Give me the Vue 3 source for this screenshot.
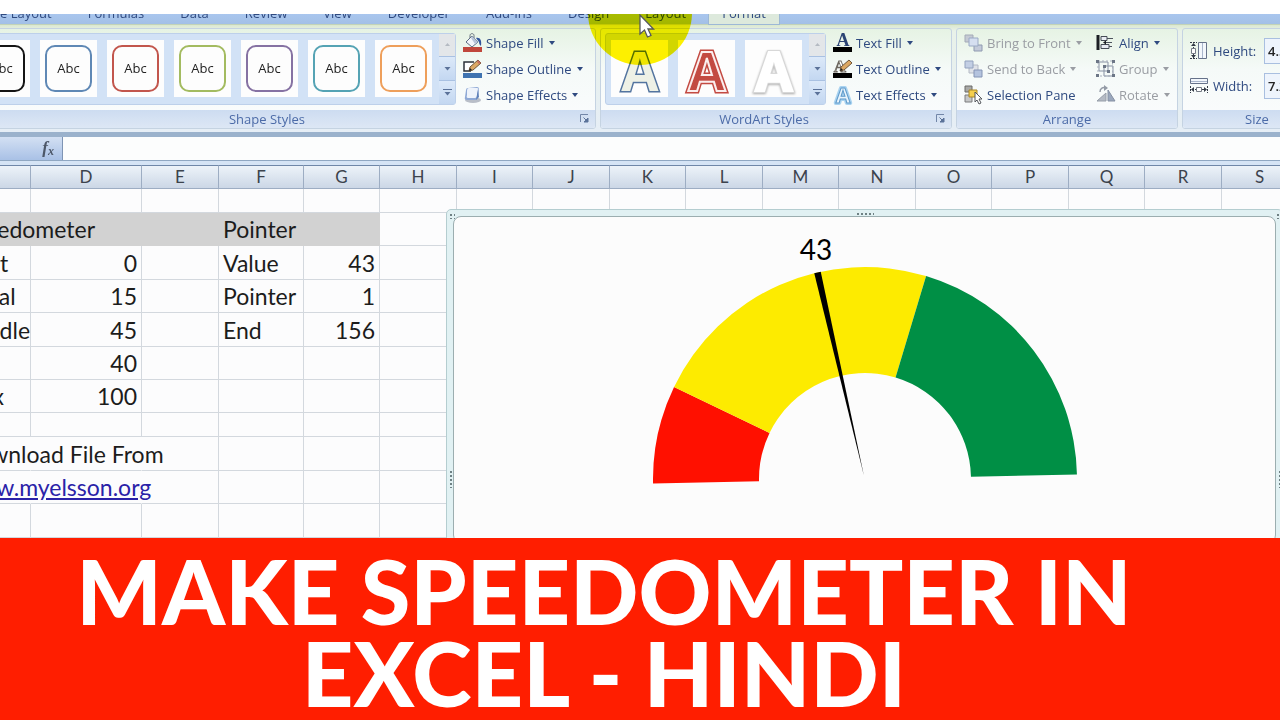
<template>
  <div class="page">
    <header class="excel">
      <!-- Tab strip -->
      <nav class="tabs" aria-label="Ribbon tabs">
        <button
          v-for="tab in tabs"
          :key="tab.id"
          type="button"
          class="tabs__item"
          :class="{ 'tabs__item--active': tab.id === activeTab }"
          @click="activeTab = tab.id"
        >{{ tab.label }}</button>
      </nav>

      <!-- Ribbon -->
      <div class="ribbon">
        <section class="group group--shapes">
          <div class="group__body">
            <div class="gallery">
              <button
                v-for="color in shapeColors"
                :key="color"
                type="button"
                class="gallery__tile"
              >
                <span class="gallery__shape" :style="{ borderColor: color }">Abc</span>
              </button>
              <div class="gallery__scroll">
                <button v-for="s in scrollers" :key="s.label" type="button" :aria-label="s.label">
                  <svg width="9" height="9" viewBox="0 0 9 9" v-html="s.svg"></svg>
                </button>
              </div>
            </div>
            <div class="commands">
              <button v-for="c in shapeCommands" :key="c.label" type="button" class="command">
                <svg width="20" height="20" viewBox="0 0 20 20" v-html="icons[c.icon]"></svg>
                <span>{{ c.label }}</span>
                <i class="caret"></i>
              </button>
            </div>
          </div>
          <footer class="group__label">Shape Styles
            <button type="button" class="launcher" aria-label="Format shape">
              <svg width="9" height="9" viewBox="0 0 9 9" v-html="launcher"></svg>
            </button>
          </footer>
        </section>

        <section class="group group--wordart">
          <div class="group__body">
            <div class="gallery">
              <button
                v-for="style in wordArt"
                :key="style"
                type="button"
                class="gallery__tile"
              >
                <svg class="wordart" :class="`wordart--${style}`" width="57" height="57" viewBox="0 0 57 57">
                  <text class="wordart__outer" x="29" y="51" text-anchor="middle">A</text>
                  <text class="wordart__inner" x="29" y="51" text-anchor="middle" aria-hidden="true">A</text>
                </svg>
              </button>
              <div class="gallery__scroll">
                <button v-for="s in scrollers" :key="s.label" type="button" :aria-label="s.label">
                  <svg width="9" height="9" viewBox="0 0 9 9" v-html="s.svg"></svg>
                </button>
              </div>
            </div>
            <div class="commands">
              <button v-for="c in textCommands" :key="c.label" type="button" class="command">
                <svg width="20" height="20" viewBox="0 0 20 20" v-html="icons[c.icon]"></svg>
                <span>{{ c.label }}</span>
                <i class="caret"></i>
              </button>
            </div>
          </div>
          <footer class="group__label">WordArt Styles
            <button type="button" class="launcher" aria-label="Format text effects">
              <svg width="9" height="9" viewBox="0 0 9 9" v-html="launcher"></svg>
            </button>
          </footer>
        </section>

        <section class="group group--arrange">
          <div class="group__body">
            <div v-for="(column, i) in arrangeCommands" :key="i" class="commands">
              <button
                v-for="c in column"
                :key="c.label"
                type="button"
                class="command"
                :disabled="c.disabled"
              >
                <svg width="20" height="20" viewBox="0 0 20 20" v-html="icons[c.icon]"></svg>
                <span>{{ c.label }}</span>
                <i v-if="!c.plain" class="caret"></i>
              </button>
            </div>
          </div>
          <footer class="group__label">Arrange</footer>
        </section>

        <section class="group group--size">
          <div class="group__body group__body--size">
            <div v-for="f in sizeFields" :key="f.id" class="field">
              <svg width="20" height="20" viewBox="0 0 20 20" v-html="icons[f.id]"></svg>
              <label :for="f.id">{{ f.label }}</label>
              <input :id="f.id" v-model="f.value" type="text">
            </div>
          </div>
          <footer class="group__label">Size</footer>
        </section>
      </div>

      <!-- Pointer highlight -->
      <div class="highlight"></div>
      <svg class="cursor" width="18" height="25" viewBox="0 0 18 25">
        <path d="M2 1v19l4.500-4 3 7 3.500-1.500-3-6.500h5.500z" fill="#fff" stroke="#55585c" stroke-width="1.300" />
      </svg>
    </header>

    <!-- Formula bar -->
    <div class="formula">
      <label class="formula__fx" for="formula">f<sub>x</sub></label>
      <input id="formula" v-model="formula" class="formula__input" type="text">
    </div>

    <main class="sheet">
      <table class="grid">
        <colgroup>
          <col v-for="name in columns" :key="name" :class="`col-${name.toLowerCase()}`">
        </colgroup>
        <thead>
          <tr>
            <th v-for="name in columns" :key="name" scope="col">{{ name === 'C' ? '' : name }}</th>
          </tr>
        </thead>
        <tbody>
          <tr v-for="(row, r) in rows" :key="r" :class="`row-${row.size}`">
            <td
              v-for="name in columns"
              :key="name"
              :class="{
                filled: row.filled && 'CDEFG'.includes(name),
                number: typeof row[name] === 'number',
                spill: row.spill && 'CD'.includes(name)
              }"
            >
              <a v-if="row.link && name === 'C'" href="#">{{ row[name] }}</a>
              <template v-else>{{ row[name] }}</template>
            </td>
          </tr>
        </tbody>
      </table>

      <!-- Chart object floating over the cells -->
      <div class="chart">
        <i class="grip grip--corner"></i>
        <i class="grip grip--top"></i>
        <i class="grip grip--corner grip--right"></i>
        <i class="grip grip--left"></i>
        <i class="grip grip--left grip--end"></i>
        <div class="chart__area">
          <svg width="430" height="270" viewBox="0 0 430 270" role="img" aria-label="Speedometer chart">
            <path v-for="s in segments" :key="s.color" :d="s.d" :fill="s.color" />
            <path :d="needle" fill="#000" />
            <text class="chart__value" x="166" y="32" text-anchor="middle">{{ value }}</text>
          </svg>
        </div>
      </div>
    </main>

    <h1 class="banner">MAKE SPEEDOMETER IN<br>EXCEL - HINDI</h1>
  </div>
</template>

<script setup>
import { computed, ref } from 'vue'

const tabs = [
  { id: 'page', label: 'Page Layout' },
  { id: 'formulas', label: 'Formulas' },
  { id: 'data', label: 'Data' },
  { id: 'review', label: 'Review' },
  { id: 'view', label: 'View' },
  { id: 'developer', label: 'Developer' },
  { id: 'addins', label: 'Add-Ins' },
  { id: 'design', label: 'Design' },
  { id: 'layout', label: 'Layout' },
  { id: 'format', label: 'Format' }
]
const activeTab = ref('format')
const formula = ref('')

const shapeColors = ['#141414', '#5f88b5', '#c2564d', '#a3bb60', '#8672a3', '#55a3b4', '#ee9f5b']
const wordArt = ['cream', 'red', 'white']

const scrollers = [
  { label: 'Previous row', svg: '<path d="M2 6l2.500-3 2.500 3z" fill="#b4bac2"/>' },
  { label: 'Next row', svg: '<path d="M1.500 3h6l-3 3.500z" fill="#5b7299"/>' },
  { label: 'More', svg: '<path d="M0 1.500h9" stroke="#5b7299"/><path d="M1.500 4h6l-3 3.500z" fill="#5b7299"/>' }
]
const launcher = '<path d="M.5 8V.5H8" fill="none" stroke="#7286a8"/><path d="M3.500 3.500l3 3M8 4v4H4z" fill="#5b7299" stroke="#5b7299"/>'

const shapeCommands = [
  { label: 'Shape Fill', icon: 'bucket' },
  { label: 'Shape Outline', icon: 'pencil' },
  { label: 'Shape Effects', icon: 'cube' }
]
const textCommands = [
  { label: 'Text Fill', icon: 'textFill' },
  { label: 'Text Outline', icon: 'textOutline' },
  { label: 'Text Effects', icon: 'textEffects' }
]
const arrangeCommands = [
  [
    { label: 'Bring to Front', icon: 'front', disabled: true },
    { label: 'Send to Back', icon: 'back', disabled: true },
    { label: 'Selection Pane', icon: 'pane', plain: true }
  ],
  [
    { label: 'Align', icon: 'align' },
    { label: 'Group', icon: 'group', disabled: true },
    { label: 'Rotate', icon: 'rotate', disabled: true }
  ]
]
const sizeFields = ref([
  { id: 'height', label: 'Height:', value: '4.52"' },
  { id: 'width', label: 'Width:', value: '7.21"' }
])

const icons = {
  bucket: '<path d="M7 5V2.500c0-2.500 4-2.500 4 0V7" fill="none" stroke="#66707d"/><path d="M3 9l6-6 6 6-6 5z" fill="#f2f5fa" stroke="#5d6d85"/><path d="M9 3l6 6-3 2-4-6z" fill="#b7c4d8"/><path d="M13 5c4-1 6 2 5 8-1-1-2-2-2-4z" fill="#31549b"/><path d="M0 14h19v5H0z" fill="#c0473c"/>',
  pencil: '<path d="M11 3H1v9h7" fill="#fff" stroke="#2b3038" stroke-width="1.500"/><path d="M6 12l1-4 8-7 3 3-8 7z" fill="#dca863" stroke="#6f5639"/><path d="M6 12l1-3 2 2z" fill="#222"/><path d="M15 1l3 3-2 1-2-2z" fill="#c46c60"/><path d="M0 14h19v5H0z" fill="#3f73b0"/>',
  cube: '<ellipse cx="10" cy="15" rx="8" ry="3" fill="#b9bec8"/><path d="M5 3l9-1q2 0 2 2l-1 8q0 2-2 3H4q-3 0-2-3l1-7q0-2 2-2z" fill="#8fa9d6"/><path d="M6 3h8q2 0 1 3l-1 5q0 2-2 2H5q-2 0-1-3l0-4q0-3 2-3z" fill="#eef3fb"/><path d="M15 4l1 8-3 3z" fill="#5f80b9"/>',
  textFill: '<text x="10" y="13" text-anchor="middle" font-family="Liberation Serif, serif" font-weight="700" font-size="18" fill="#2b4374">A</text><path d="M0 14h19v5H0z" fill="#000"/>',
  textOutline: '<text x="7" y="13" text-anchor="middle" font-family="Liberation Serif, serif" font-weight="700" font-size="17" fill="#fff" stroke="#6c675f" stroke-width=".8">A</text><path d="M7 12l1-4 8-7 3 3-8 7z" fill="#dca863" stroke="#6f5639"/><path d="M7 12l1-3 2 2z" fill="#222"/><path d="M0 14h19v5H0z" fill="#000"/>',
  textEffects: '<text x="10" y="18" text-anchor="middle" font-family="Open Sans, sans-serif" font-weight="700" font-size="21" fill="#dceefb" stroke="#a9d3f0" stroke-width="4" stroke-linejoin="round">A</text><text x="10" y="18" text-anchor="middle" font-family="Open Sans, sans-serif" font-weight="700" font-size="21" fill="#e8f4fc" stroke="#5f9acb" stroke-width="1">A</text>',
  front: '<path d="M1 2h8v7H1z" fill="#c5cad3" stroke="#a4abb7"/><path d="M10 12h8v6h-8z" fill="#c3cad9" stroke="#8f9ab0"/><path d="M5 5h9v8H5z" fill="#d5dff0" stroke="#9aa9c4"/>',
  back: '<path d="M5 6h9v8H5z" fill="#dfe2e8" stroke="#b4bac5"/><path d="M1 2h8v7H1z" fill="#c3cfe4" stroke="#93a2be"/><path d="M10 11h8v7h-8z" fill="#b4c3de" stroke="#8494b5"/>',
  pane: '<path d="M1 1h7v6H1z" fill="#a9a9a7" stroke="#6b6b68"/><path d="M1 10h7v7H1z" fill="#c6c7c8" stroke="#7c7d7f"/><path d="M5 5h8v7H5z" fill="#f5cf4e" stroke="#a98728"/><path d="M11 7v10l2-2 2 4 2-1-2-4h3z" fill="#fff" stroke="#54575c"/>',
  align: '<path d="M2 2v15" stroke="#1c1f24" stroke-width="3"/><path d="M5 3.500h6v4H5zM5 11.500h8v4H5z" fill="#e9edf3" stroke="#454b55"/><path d="M11 5.500h6M8 9.500h8M13 13.500h3" stroke="#4d535d"/><path d="M7 9.500l3-2v4z" fill="#1c1f24"/>',
  group: '<path d="M3 3h9v9H3zM8 7h9v10H8z" fill="none" stroke="#8791a3"/><path d="M2 2h14.500v15H2z" fill="none" stroke="#a9b0bd" stroke-dasharray="2 2"/><path d="M0 1h3v3H0zM16 1h3v3h-3zM0 15h3v3H0zM16 15h3v3h-3zM7 6h3v3H7zM11 11h3v3h-3z" fill="#6c7686"/>',
  rotate: '<path d="M10 16H1l9-8z" fill="#b4bac4" stroke="#969ea9"/><path d="M12 5v11h7z" fill="#9ba8bd" stroke="#8590a3"/><path d="M4 7c0-4 3-5 6-4" fill="none" stroke="#949ba6" stroke-width="1.500"/><path d="M8 0l4 3-4 3z" fill="#949ba6"/>',
  height: '<path d="M9.500 1.500h8v16h-8z" fill="#f3f7fc" stroke="#66728a"/><path d="M13.500 2v15" stroke="#a9b6cc"/><path d="M1 1.500h7M1 17.500h7M4.500 3v4M4.500 13v4" stroke="#343b47" stroke-dasharray="2 1"/><path d="M2 5l2.500-3 2.500 3zM2 14l2.500 3 2.500-3z" fill="#343b47"/><path d="M2.500 7.500h4v5h-4z" fill="#fff" stroke="#747a85"/>',
  width: '<path d="M1.500 2.500h17v5h-17z" fill="#f3f7fc" stroke="#66728a"/><path d="M2 5.500h16" stroke="#a9b6cc"/><path d="M1.500 10v7M18.500 10v7M3 13.500h4M13 13.500h4" stroke="#343b47" stroke-dasharray="2 1"/><path d="M5 11l-3 2.500 3 2.500zM15 11l3 2.500-3 2.500z" fill="#343b47"/><path d="M7.500 11.500h5v4h-5z" fill="#fff" stroke="#747a85"/>'
}

// Sheet data
const columns = 'CDEFGHIJKLMNOPQRS'.split('')
const rows = [
  { size: 'short' },
  { size: 'low', filled: true, C: 'Speedometer', F: 'Pointer' },
  { size: 'tall', C: 'Start', D: 0, F: 'Value', G: 43 },
  { size: 'low', C: 'Initial', D: 15, F: 'Pointer', G: 1 },
  { size: 'tall', C: 'Middle', D: 45, F: 'End', G: 156 },
  { size: 'low', D: 40 },
  { size: 'low', C: 'Max', D: 100 },
  { size: 'short' },
  { size: 'tall', spill: true, C: 'Download File From' },
  { size: 'low', spill: true, link: true, C: 'www.myelsson.org' },
  { size: 'tall' }
]

// Gauge geometry
const value = ref(43)
const center = { x: 215, y: 251 }
const outer = 212
const inner = 106
const tilt = -1.25

const point = (angle, radius) => {
  const rad = (angle * Math.PI) / 180
  const x = center.x - radius * Math.cos(rad)
  const y = center.y - radius * Math.sin(rad)
  return `${x.toFixed(2)} ${y.toFixed(2)}`
}

const segments = computed(() => {
  let start = tilt
  return [
    { share: 15, color: '#ff1000' },
    { share: 45, color: '#fdeb00' },
    { share: 40, color: '#008f45' }
  ].map(({ share, color }) => {
    const end = start + share * 1.8
    const d = `M${point(start, outer)}A${outer} ${outer} 0 0 1 ${point(end, outer)}` +
      `L${point(end, inner)}A${inner} ${inner} 0 0 0 ${point(start, inner)}z`
    start = end
    return { color, d }
  })
})

const needle = computed(() => {
  const angle = value.value * 1.8 + tilt
  return `M214 248L${point(angle, outer)}L${point(angle + 1.8, outer)}z`
})
</script>

<style>
body {
  margin: 0;
  background: #fff;
}
</style>

<style scoped>
.page {
  display: flex;
  flex-direction: column;
  min-height: 100vh;
  padding-top: 14px;
  box-sizing: border-box;
  overflow: hidden;
  font-family: "Open Sans", "Noto Sans", sans-serif;
  font-size: 13px;
  color: #2f4a80;
}

button,
input {
  font: inherit;
  color: inherit;
}

button {
  padding: 0;
  border: 0;
  background: none;
}

svg {
  display: block;
  flex: none;
}

.excel {
  position: relative;
  overflow: hidden;
}

/* Tabs */
.tabs {
  display: flex;
  align-items: flex-end;
  height: 10px;
  padding-right: 24px;
  margin-left: -40px;
  background: linear-gradient(#a9c6ee, #a3c0e6);
}

.tabs__item {
  flex: none;
  height: 20px;
  padding: 0 18px 2px;
  line-height: 18px;
}

.tabs__item--active {
  margin: 0 5px;
  padding: 0 13px 2px;
  background: #dde9dc;
  box-shadow: 0 0 0 1px #9db8d6;
}

/* Ribbon */
.ribbon {
  display: flex;
  gap: 4px;
  margin-left: -62px;
  padding: 3px 0;
  border-top: 1px solid #c3d3b8;
  border-bottom: 5px solid #9bb2cc;
  background: linear-gradient(#dbe8cf, #e9f2e9 6px, #e6eef6);
}

.group {
  display: flex;
  flex: none;
  flex-direction: column;
  box-sizing: border-box;
  height: 101px;
  border: 1px solid #c5d3e2;
  border-radius: 3px;
  background: linear-gradient(#e6f3e4, #f5faf8 40px, #fbfcfe);
  overflow: hidden;
}

.group--shapes {
  width: 658px;
}

.group--wordart {
  width: 352px;
}

.group--arrange {
  width: 222px;
}

.group--size {
  width: 150px;
}

.group__body {
  display: flex;
  flex: 1;
  align-items: center;
  padding: 0 0 2px 4px;
}

.group--shapes .group__body {
  padding-left: 28px;
}

.group__label {
  position: relative;
  height: 18px;
  line-height: 18px;
  text-align: center;
  color: #4c6ba8;
  background: linear-gradient(#cddcf1, #dde7f5);
}

.group--wordart .group__label {
  padding-right: 24px;
}

.launcher {
  position: absolute;
  right: 6px;
  top: 4px;
}

.gallery {
  display: flex;
  align-items: center;
  gap: 10px;
  box-sizing: border-box;
  height: 72px;
  padding-left: 5px;
  border: 1px solid #bdd0ea;
  border-radius: 3px;
  background: #d2e2f6;
}

.gallery__tile {
  display: flex;
  align-items: center;
  justify-content: center;
  width: 57px;
  height: 57px;
  background: #fdfdfd;
}

.gallery__shape {
  box-sizing: border-box;
  width: 47px;
  height: 47px;
  border: 2px solid;
  border-radius: 10px;
  line-height: 43px;
  color: #222;
}

.gallery__scroll {
  display: flex;
  flex-direction: column;
  gap: 1px;
  width: 16px;
  height: 70px;
  margin-left: -3px;
  background: #a9c1e2;
}

.gallery__scroll button {
  display: flex;
  flex: 1;
  align-items: center;
  justify-content: center;
  background: linear-gradient(#dce9f9, #c3d7f1);
}

.gallery__scroll button:first-child {
  background: #e3e6e9;
}

.wordart {
  font-size: 54px;
  font-weight: 700;
}

.wordart--cream .wordart__outer {
  fill: #f0f2e4;
  stroke: #53749f;
  stroke-width: 3px;
}

.wordart--cream .wordart__inner {
  fill: #eef1e6;
}

.wordart--red .wordart__outer {
  fill: #fff;
  stroke: #c34a42;
  stroke-width: 5px;
}

.wordart--red .wordart__inner {
  fill: #c34a42;
  stroke: #fbeeee;
  stroke-width: 2px;
}

.wordart--white .wordart__outer {
  fill: #fff;
  stroke: #d8d8d8;
  stroke-width: 4px;
  filter: drop-shadow(0 1px 1px #aaa);
}

.wordart--white .wordart__inner {
  fill: #fff;
  stroke: #fff;
  stroke-width: 2px;
}

.commands {
  display: flex;
  flex-direction: column;
  align-items: flex-start;
  padding-left: 7px;
}

.group--arrange .commands {
  width: 128px;
  padding-left: 3px;
}

.group--arrange .commands + .commands {
  width: auto;
  padding-left: 4px;
}

.command {
  display: flex;
  align-items: center;
  gap: 3px;
  height: 26px;
  font-weight: 500;
  white-space: nowrap;
}

.command:disabled {
  color: #9a9da3;
}

.caret {
  margin-left: 2px;
  border: 3px solid transparent;
  border-top: 4px solid currentColor;
  border-bottom: 0;
}

.group__body--size {
  flex-direction: column;
  align-items: flex-start;
  justify-content: center;
  gap: 9px;
}

.field {
  display: flex;
  align-items: center;
  padding-left: 2px;
  font-weight: 500;
}

.field label {
  width: 51px;
  padding-left: 4px;
}

.field input {
  box-sizing: border-box;
  width: 60px;
  height: 26px;
  padding: 0 3px;
  border: 1px solid #a9bfe0;
  background: #eef4fc;
  font-weight: 600;
  color: #222;
}

.highlight {
  position: absolute;
  top: -53px;
  left: 588px;
  width: 104px;
  height: 104px;
  border-radius: 50%;
  background: #fff200;
  mix-blend-mode: multiply;
}

.cursor {
  position: absolute;
  top: 0;
  left: 638px;
}

/* Formula bar */
.formula {
  display: flex;
  height: 23px;
  border-bottom: 1px solid #8fa7c2;
  background: #fcfdfd;
}

.formula__fx {
  box-sizing: border-box;
  width: 63px;
  padding-right: 8px;
  border-right: 1px solid #7e94b4;
  background: linear-gradient(#d3e0f3, #a9c1e6);
  font-family: "Liberation Serif", serif;
  font-size: 17px;
  font-style: italic;
  font-weight: 700;
  line-height: 22px;
  text-align: right;
  color: #4c5768;
}

.formula__fx sub {
  font-size: 12px;
  line-height: 0;
  vertical-align: -2px;
}

.formula__input {
  flex: 1;
  min-width: 0;
  padding: 0 4px;
  border: 0;
  background: none;
}

/* Sheet */
.sheet {
  position: relative;
  flex: 1;
  overflow: hidden;
  padding-top: 4px;
  background: #d5e4f5;
  font-family: Lato, sans-serif;
}

.grid {
  width: 1342px;
  margin-left: -44px;
  border-collapse: separate;
  border-spacing: 0;
  table-layout: fixed;
  background: #fcfcfd;
}

.col-c {
  width: 75px;
}

.col-d {
  width: 111px;
}

.col-f {
  width: 85px;
}

.col-e,
.col-h,
.col-j,
.col-l,
.col-n,
.col-p,
.col-r {
  width: 77px;
}

.col-g,
.col-i,
.col-k,
.col-m,
.col-o,
.col-q,
.col-s {
  width: 76px;
}

.grid th {
  box-sizing: border-box;
  height: 24px;
  padding: 0;
  border: 1px solid #9dadc3;
  border-width: 1px 1px 1px 0;
  border-top-color: #6f87a8;
  background: linear-gradient(#edf3f9, #ccd7e6);
  font-size: 17px;
  font-weight: 400;
  line-height: 20px;
  color: #3c434d;
}

.grid td {
  box-sizing: border-box;
  padding: 0 4px;
  border-right: 1px solid #d3d8de;
  border-bottom: 1px solid #d3d8de;
  font-size: 23px;
  line-height: 28px;
  white-space: nowrap;
  color: #1c1c1c;
}

.grid td:first-child {
  padding-right: 0;
}

.grid .filled {
  border-color: #d2d2d2;
  background: #d2d2d2;
}

.grid .number {
  text-align: right;
}

.grid .spill {
  border-right-color: transparent;
}

.row-short td {
  height: 24px;
}

.row-low td {
  height: 33px;
}

.row-tall td {
  height: 34px;
}

.grid a {
  color: #2a22a8;
}

/* Chart */
.chart {
  position: absolute;
  top: 48px;
  right: -3px;
  bottom: -12px;
  left: 446px;
  padding: 6px;
  border: 1px solid #b4cdd0;
  border-radius: 5px;
  background: #e1f1f3;
}

.chart__area {
  display: flex;
  justify-content: center;
  height: 100%;
  box-sizing: border-box;
  padding-top: 11px;
  border: 1px solid #9caeb0;
  border-radius: 8px;
  background: #fcfcfc;
}

.chart__value {
  font-family: Lato, sans-serif;
  font-size: 28px;
  fill: #000;
}

.grip {
  position: absolute;
  top: 3px;
  left: 2px;
  width: 6px;
  height: 6px;
  background: radial-gradient(circle, #6f8184 1px, transparent 1px) 0 0 / 4px 4px;
}

.grip--top {
  top: 2px;
  left: 50%;
  width: 18px;
  height: 4px;
  margin-left: -9px;
}

.grip--right {
  right: 0;
  left: auto;
}

.grip--left {
  top: 260px;
  width: 4px;
  height: 18px;
}

.grip--end {
  right: 0;
  left: auto;
}

/* Banner */
.banner {
  margin: 0;
  padding: 11px 72px 7px 0;
  background: #ff1e00;
  font-family: Lato, sans-serif;
  font-size: 90px;
  font-weight: 900;
  line-height: 82px;
  text-align: center;
  color: #fff;
}
</style>
